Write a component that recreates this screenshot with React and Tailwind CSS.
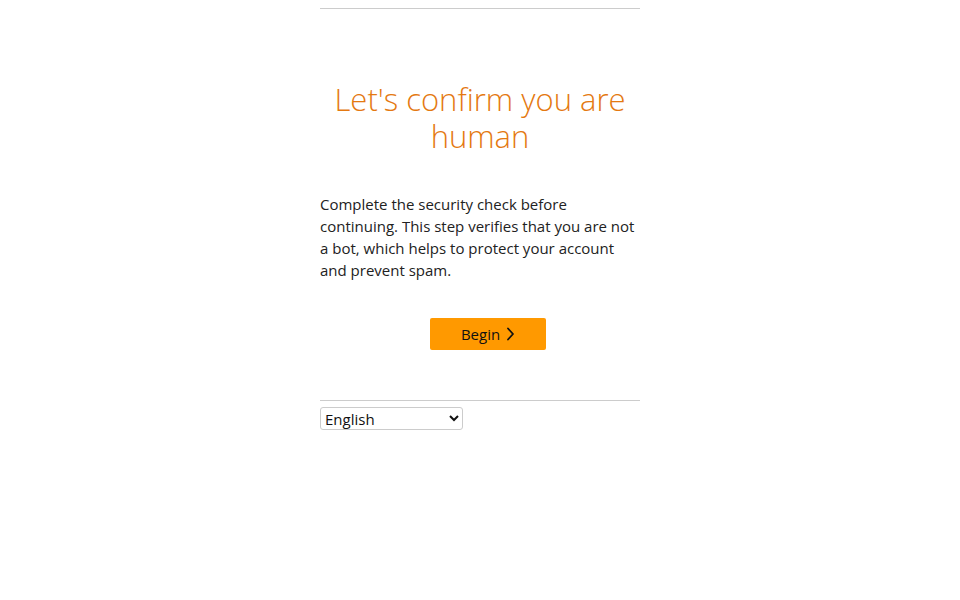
import React from 'react'

function App() {
  return (
    <div className="min-h-screen bg-white">
      <div className="mx-auto w-[320px] pt-2 font-['Open_Sans',sans-serif] text-[#333]">
        <div className="border-t border-[#ccc]" />

        <h1 className="mt-[72px] text-center text-[31px] font-light leading-[37px] text-[#e47911]">
          Let's confirm you are human
        </h1>

        <p className="mt-[38px] text-[15px] leading-[22px] text-[#222]">
          Complete the security check before continuing. This step verifies that you are not a bot, which helps to protect your account and prevent spam.
        </p>

        <div className="mt-[37px] flex justify-center pl-4">
          <button className="flex h-8 w-[116px] items-center justify-center gap-[6px] rounded-[2px] bg-[#ff9900] text-[15px] font-medium text-[#111]">
            Begin
            <svg width="9" height="14" viewBox="0 0 9 14" fill="none">
              <path d="M2 1.5L7 7L2 12.5" stroke="#111" strokeWidth="1.8" strokeLinecap="round" strokeLinejoin="round" />
            </svg>
          </button>
        </div>

        <div className="mt-[50px] border-t border-[#ccc]" />

        <select className="mt-[6px] h-[23px] w-[143px] rounded-[3px] border border-[#ccc] bg-white pl-0 text-[15px] text-[#111]">
          <option>English</option>
        </select>
      </div>
    </div>
  )
}

export default App
